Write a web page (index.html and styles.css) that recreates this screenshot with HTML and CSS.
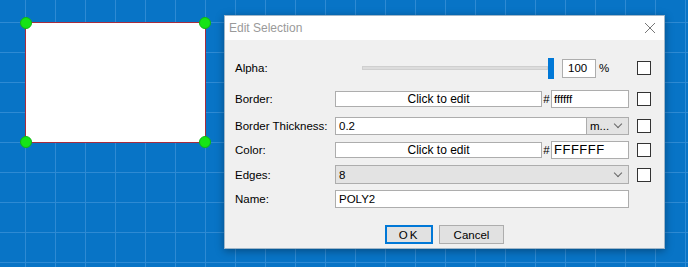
FILE: index.html
```html
<!DOCTYPE html>
<html lang="en">
	<head>
		<meta charset="UTF-8">
		<title>Edit Selection</title>
		<link rel="stylesheet" href="styles.css">
	</head>

	<body>
		<main class="desktop">
			<div class="shape">
				<span class="handle tl"></span>
				<span class="handle tr"></span>
				<span class="handle bl"></span>
				<span class="handle br"></span>
			</div>

			<section class="dialog">
				<header class="titlebar">
					<span class="title">Edit Selection</span>
					<svg class="close" width="12" height="12" viewBox="0 0 12 12">
						<path d="M1 1 L11 11 M11 1 L1 11" stroke="#777" stroke-width="1" fill="none"/>
					</svg>
				</header>

				<div class="body">
					<div class="form">
						<label class="lbl">Alpha:</label>
						<div class="ctl alpha">
							<span class="track"></span>
							<span class="thumb"></span>
							<span class="field pct">100</span>
							<span class="unit">%</span>
						</div>
						<span class="check"></span>

						<label class="lbl">Border:</label>
						<div class="ctl">
							<span class="btn-edit">Click to edit</span>
							<span class="hash">#</span>
							<span class="field hex">ffffff</span>
						</div>
						<span class="check"></span>

						<label class="lbl">Border Thickness:</label>
						<div class="ctl">
							<span class="field grow">0.2</span>
							<span class="unit-drop">m...<i class="chev"></i></span>
						</div>
						<span class="check"></span>

						<label class="lbl">Color:</label>
						<div class="ctl">
							<span class="btn-edit">Click to edit</span>
							<span class="hash">#</span>
							<span class="field hex upper">FFFFFF</span>
						</div>
						<span class="check"></span>

						<label class="lbl">Edges:</label>
						<div class="ctl">
							<span class="select">8<i class="chev"></i></span>
						</div>
						<span class="check"></span>

						<label class="lbl">Name:</label>
						<div class="ctl">
							<span class="field grow">POLY2</span>
						</div>
						<span></span>
					</div>

					<div class="actions">
						<button class="ok">OK</button>
						<button>Cancel</button>
					</div>
				</div>
			</section>
		</main>
	</body>
</html>
```

FILE: styles.css
```css
body {
	margin: 0;
	padding: 0;
	font-family: "Liberation Sans", Arial, sans-serif;
	font-size: 11.5px;
	color: #000;
}

.desktop {
	position: relative;
	width: 688px;
	height: 267px;
	overflow: hidden;
	background-color: #0874c6;
	background-image:
		linear-gradient(to right, #2e8ad3 1px, transparent 1px),
		linear-gradient(to bottom, #2e8ad3 1px, transparent 1px);
	background-size: 30px 30px;
	background-position: 25px 22px;
}

/* selected shape on the canvas */
.shape {
	position: absolute;
	left: 25px;
	top: 22px;
	width: 179px;
	height: 119px;
	background: #fff;
	border: 1px solid #a82c3c;
}

.handle {
	position: absolute;
	width: 10px;
	height: 10px;
	border-radius: 50%;
	background: #16e416;
	border: 1px solid #10b810;
}

.handle.tl { left: -6px; top: -6px; }
.handle.tr { right: -6px; top: -6px; }
.handle.bl { left: -6px; bottom: -6px; }
.handle.br { right: -6px; bottom: -6px; }

/* dialog window */
.dialog {
	position: absolute;
	left: 224px;
	top: 15px;
	width: 439px;
	height: 232px;
	border: 1px solid #9fb6c9;
	background: #f0f0f0;
	box-shadow: 0 2px 8px rgba(0, 0, 0, 0.35);
	display: flex;
	flex-direction: column;
}

.titlebar {
	height: 24px;
	background: #fff;
	display: flex;
	align-items: center;
	justify-content: space-between;
	padding: 0 8px 0 4px;
}

.title {
	color: #9a9a9a;
	font-size: 12px;
}

.close {
	display: block;
}

.body {
	flex: 1;
	padding: 12px 0 0 10px;
	display: flex;
	flex-direction: column;
}

.form {
	display: grid;
	grid-template-columns: 92px 294px 14px;
	grid-template-rows: 32px 29px 25px 24px 25px 24px;
	column-gap: 8px;
	align-items: center;
}

.lbl {
	white-space: nowrap;
}

.ctl {
	display: flex;
	align-items: center;
	height: 100%;
}

.check {
	width: 12px;
	height: 12px;
	border: 1px solid #333;
	background: #fff;
}

.field {
	box-sizing: border-box;
	height: 18px;
	line-height: 16px;
	background: #fff;
	border: 1px solid #adadad;
	padding: 0 3px;
}

.grow {
	flex: 1;
}

/* alpha slider */
.track {
	margin-left: 27px;
	width: 186px;
	height: 4px;
	box-sizing: border-box;
	background: #dcdcdc;
	border: 1px solid #cfcfcf;
}

.thumb {
	width: 6px;
	height: 21px;
	background: #0078d7;
}

.pct {
	margin-left: 8px;
	width: 34px;
	height: 19px;
	padding-left: 5px;
}

.unit {
	margin-left: 3px;
}

.btn-edit {
	box-sizing: border-box;
	width: 207px;
	height: 16px;
	line-height: 14px;
	background: #fff;
	border: 1px solid #adadad;
	text-align: center;
	font-size: 12px;
}

.hash {
	width: 9px;
	text-align: center;
}

.hex {
	width: 78px;
	padding-left: 2px;
}

.upper {
	font-size: 13px;
	letter-spacing: 0.5px;
}

.unit-drop,
.select {
	box-sizing: border-box;
	height: 18px;
	line-height: 16px;
	background: #e3e3e3;
	border: 1px solid #adadad;
	padding: 0 3px;
	display: flex;
	align-items: center;
	justify-content: space-between;
}

.unit-drop {
	width: 42px;
	border-left: none;
}

.select {
	width: 294px;
	height: 19px;
}

.chev {
	width: 5px;
	height: 5px;
	border-right: 1px solid #666;
	border-bottom: 1px solid #666;
	transform: translateY(-2px) rotate(45deg);
	margin-right: 4px;
}

.actions {
	margin-top: 14px;
	margin-left: -10px;
	display: flex;
	justify-content: center;
	gap: 6px;
}

button {
	font: inherit;
	box-sizing: border-box;
	height: 19px;
	width: 65px;
	padding: 0;
	background: #e1e1e1;
	border: 1px solid #adadad;
}

button.ok {
	width: 48px;
	border: 2px solid #0078d7;
	letter-spacing: 2px;
}
```
